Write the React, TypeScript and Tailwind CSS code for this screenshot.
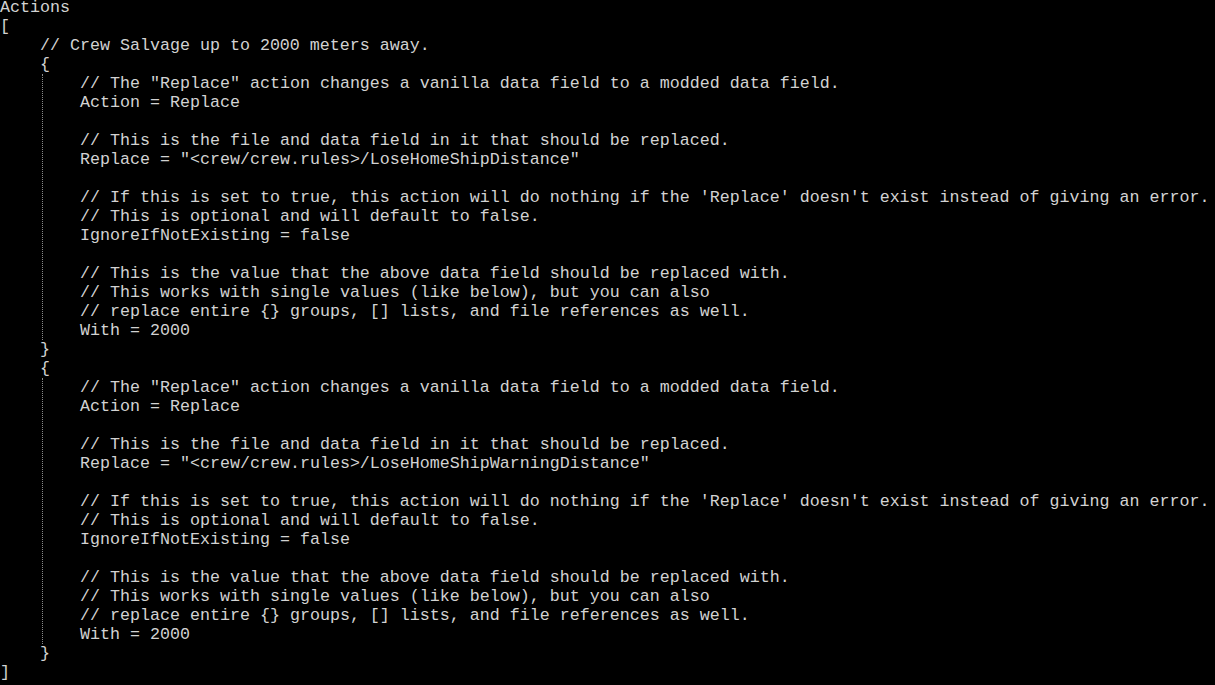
import React from "react";

const block = [
  `// The "Replace" action changes a vanilla data field to a modded data field.`,
  `Action = Replace`,
  ``,
  `// This is the file and data field in it that should be replaced.`,
  `__REPLACE__`,
  ``,
  `// If this is set to true, this action will do nothing if the 'Replace' doesn't exist instead of giving an error.`,
  `// This is optional and will default to false.`,
  `IgnoreIfNotExisting = false`,
  ``,
  `// This is the value that the above data field should be replaced with.`,
  `// This works with single values (like below), but you can also`,
  `// replace entire {} groups, [] lists, and file references as well.`,
  `With = 2000`,
];

function Line({ text }: { text: string }) {
  return <div className="h-[19px] leading-[19px] whitespace-pre">{text === "" ? "\u00a0" : text}</div>;
}

function Block({ replace }: { replace: string }) {
  return (
    <>
      <Line text="    {" />
      <div className="ml-[42px] border-l border-dotted border-[#8a8a8a] pl-[37px]">
        {block.map((l, i) => (
          <Line key={i} text={l === "__REPLACE__" ? `Replace = "${replace}"` : l} />
        ))}
      </div>
      <Line text="    }" />
    </>
  );
}

export default function App() {
  return (
    <div
      className="w-[1215px] h-[685px] bg-black text-[#d2d2d2] overflow-hidden text-[16.67px]"
      style={{ fontFamily: '"Liberation Mono", "Courier New", monospace' }}
    >
      <div className="-mt-[2px]">
        <Line text="Actions" />
        <Line text="[" />
        <Line text="    // Crew Salvage up to 2000 meters away." />
        <Block replace="<crew/crew.rules>/LoseHomeShipDistance" />
        <Block replace="<crew/crew.rules>/LoseHomeShipWarningDistance" />
        <Line text="]" />
      </div>
    </div>
  );
}
